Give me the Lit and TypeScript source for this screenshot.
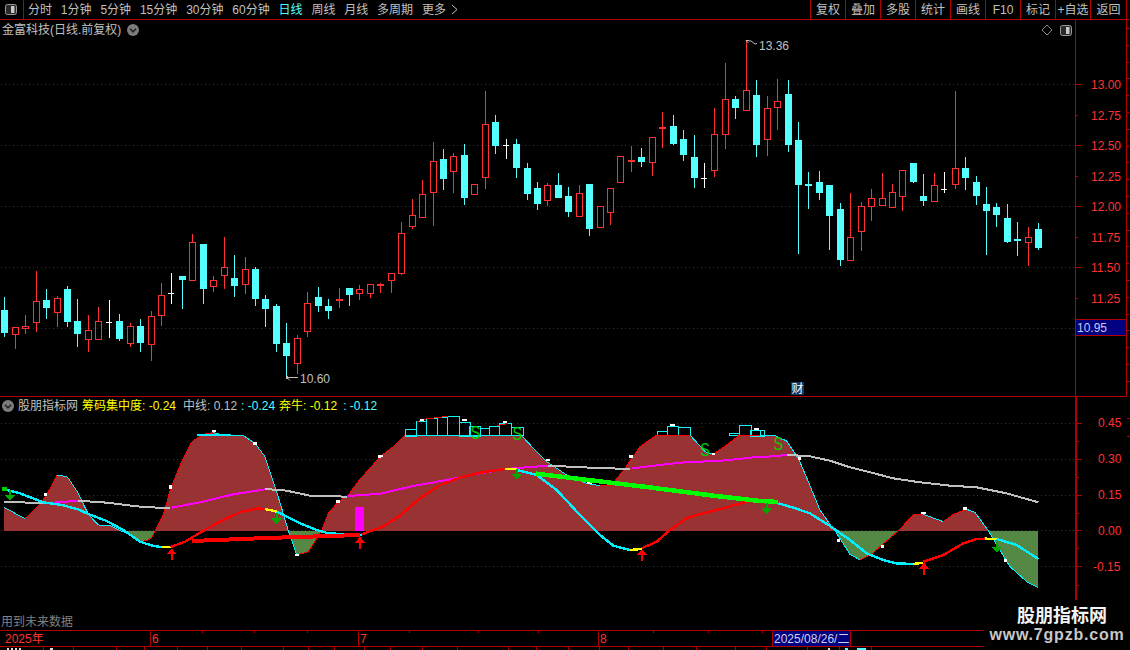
import { LitElement, html, svg, css, unsafeCSS } from "lit";
import { customElement } from "lit/decorators.js";

type P = [number, number];
const RED = "#ff3232", CYAN = "#54ffff", GRID = "#a00000", AXIS = "#b00000";
const LRED = "#ff0000", LCYAN = "#00f0ff";

// candles: [high, bodyTop, bodyBottom, low, kind] read in crop units
const A = [[621,660,729,740,"c"],[712,712,734,776,"r"],[676,709,716,731,"r"],[544,634,700,725,"r"],[598,630,654,686,"c"],[618,625,668,710,"r"],[589,597,696,710,"c"],[628,693,732,770,"c"],[676,721,749,785,"r"],[652,694,749,749,"r"],[631,697,697,743,"w"],[673,693,747,752,"c"],[700,709,761,770,"r"],[688,708,759,785,"c"],[664,679,764,812,"r"],[580,616,677,707,"r"],[550,610,610,641,"w"],[558,558,570,656,"c"],[433,457,572,572,"r"],[462,462,597,641,"c"],[559,571,590,605,"r"],[442,532,557,596,"r"],[496,565,588,620,"c"],[502,538,584,611,"r"],[532,538,627,647,"c"],[616,628,657,710,"c"],[643,649,762,785,"c"],[700,759,798,860,"c"],[736,745,821,851,"r"],[607,640,725,740,"r"],[592,622,648,665,"c"],[628,649,663,686,"c"],[595,626,626,653,"R"],[595,595,615,647,"c"],[586,598,611,629,"r"],[583,583,611,623,"r"],[578,581,581,609,"R"]];
const B = [[580,580,603,639,"r"],[427,460,581,585,"r"],[358,406,440,446,"r"],[300,343,413,413,"r"],[186,244,338,437,"r"],[208,237,297,330,"c"],[220,229,275,338,"r"],[193,225,354,374,"c"],[313,313,344,344,"r"],[34,133,293,326,"r"],[106,126,197,221,"c"],[178,196,196,236,"w"],[178,192,264,293,"c"],[250,264,342,360,"c"],[307,324,372,390,"c"],[310,316,362,377,"r"],[280,315,354,354,"c"],[322,348,396,411,"c"],[316,340,410,410,"r"],[312,312,447,468,"c"],[379,379,443,443,"r"],[325,325,398,435,"r"],[229,229,308,308,"r"],[199,240,240,276,"R"],[205,232,246,261,"c"],[172,172,248,288,"r"],[97,142,148,204,"r"],[106,138,192,195,"c"],[151,177,225,243,"c"],[166,231,294,324,"c"],[250,295,295,324,"w"],[85,163,272,291,"r"],[-51,58,164,207,"r"],[48,57,84,117,"c"],[-120,31,92,92,"r"],[0,45,195,231,"c"]];
const C = [[108,145,239,288,"r"],[57,124,143,210,"r"],[60,102,255,276,"c"],[186,240,375,582,"c"],[336,371,371,447,"C"],[333,366,399,420,"c"],[375,375,468,570,"c"],[429,447,600,618,"c"],[400,532,602,602,"r"],[427,439,515,573,"r"],[387,415,440,483,"r"],[340,415,437,437,"r"],[372,397,443,443,"r"],[331,331,410,453,"r"],[309,309,366,370,"c"],[342,408,423,438,"c"],[340,376,425,425,"r"],[336,388,388,398,"w"],[93,325,374,387,"r"],[291,324,354,390,"c"],[348,366,408,435,"c"],[381,432,453,585,"c"],[429,441,465,501,"c"],[432,474,546,549,"c"],[486,537,537,588,"C"],[501,532,548,618,"r"],[489,507,565,570,"c"]];
const cv = (rows: any[], off: number) => rows.map((r) => [off + r[0] / 3, off + r[1] / 3, off + r[2] / 3, off + r[3] / 3, r[4]]);
const CANDLES: any[] = [...cv(A, 90), ...cv(B, 80), ...cv(C, 60)];

const s6 = (a: number[]): P[] => pairs(a, 0);
const s7 = (a: number[]): P[] => pairs(a, 380);
const s8 = (a: number[]): P[] => pairs(a, 750);
function pairs(a: number[], ox: number): P[] {
  const out: P[] = [];
  for (let i = 0; i < a.length; i += 2) out.push([ox + a[i] / 3, 395 + a[i + 1] / 3]);
  return out;
}
const ps = (p: P[]) => p.map((q) => q.join(",")).join(" ");

const AREA: P[] = [
  ...s6([12,337,75,371,113,335,140,300,172,240,202,245,232,290,265,358,295,390,330,392,360,407,385,415,420,440,440,437,455,428,465,407,490,360,512,280,545,200,575,140,610,118,640,113,670,120,730,122,765,145,795,185,830,290,865,407,890,480,925,470,965,407,985,355,1015,320,1045,300,1078,255,1110,220]),
  ...s7([0,185,40,155,75,120,425,122,465,165,500,200,560,240,620,265,660,272,695,270,735,220,780,155,830,120,930,120,975,170,1000,178,1040,150,1080,120]),
  ...s8([30,120,75,122,110,138,145,190,175,260,210,345,245,395,255,407,300,478,330,495,365,477,430,420,445,407,490,360,520,358,580,380,610,358,650,343,675,352,715,407,780,515,830,560,865,578]),
];
const AREA_POLY: P[] = [[AREA[0][0], 531], ...AREA, [AREA[AREA.length - 1][0], 531]];

const MAIN_LINE: [string, P[]][] = [
  [LCYAN, s6([22,285,60,295,130,322,185,330,235,343,265,357,320,378,370,405,420,440,460,453,485,456])],
  ["#ffff00", s6([485,456,512,456])],
  [LRED, s6([512,456,555,440,600,413,660,380,720,352,770,340,795,342])],
  ["#ffff00", s6([795,342,830,350])],
  [LCYAN, s6([830,350,900,385,950,405,985,415,1085,420])],
  [LRED, [...s6([1085,418,1140,398]), ...s7([0,400,60,362,120,310,180,270,240,248,300,233,375,222])]],
  ["#ffff00", s7([375,222,410,222])],
  [LCYAN, s7([410,225,470,240,530,285,600,360,660,420,700,452,750,465])],
  ["#ffff00", s7([750,465,785,462])],
  [LRED, s7([785,460,830,440,870,405,920,370,950,360,1040,337,1100,320,1140,315])],
  [LCYAN, s8([85,325,130,338,180,355,240,393,300,435,350,475,400,495,440,505,490,507])],
  ["#ffff00", s8([490,507,520,503])],
  [LRED, s8([520,500,580,480,640,445,680,432,705,431])],
  ["#ffff00", s8([705,431,740,432])],
  [LCYAN, s8([740,432,800,450,865,492])],
];
const GRAY = "#c0c0c0", MAG = "#ff00ff";
const MA_LINE: [string, P[]][] = [
  [GRAY, s6([12,322,130,323])],
  [MAG, s6([135,325,235,317])],
  [GRAY, s6([235,317,320,323,420,335,510,340])],
  [MAG, s6([515,338,600,322,700,298,795,283])],
  [GRAY, s6([795,282,860,287,930,302,1040,305])],
  [MAG, [...s6([1045,303,1140,296]), ...s7([0,296,100,273,200,255,300,235,375,222,505,212])]],
  [GRAY, s7([505,212,630,218,750,222])],
  [MAG, [...s7([755,220,900,203,1040,196,1140,185]), ...s8([30,187,110,180])]],
  [GRAY, s8([110,180,175,183,240,197,300,217,380,237,430,250,510,262,600,272,680,277,770,295,865,322])],
];
const THICK: [string, number, P[]][] = [
  [LRED, 4, s6([575,438,800,429,1080,420])],
  ["#00ff00", 4.5, [...s7([468,236,600,252,800,276,1000,302,1140,318]), ...s8([30,318,85,321])]],
];
const WHITE: number[][] = [
  ...[[133,142,295,305],[507,516,270,282],[635,648,105,112],[760,772,140,150],[885,898,478,485],[1008,1020,315,325],[1135,1140,180,190]].map((r) => [r[0] / 3, r[1] / 3, r[2], r[3]]),
  ...[[0,5,180,186],[120,133,72,78],[245,260,72,78],[370,383,79,85],[497,510,193,200],[620,635,262,267],[747,758,181,191],[870,885,88,93],[995,1005,175,180],[1122,1137,100,105]].map((r) => [380 + r[0] / 3, 380 + r[1] / 3, r[2], r[3]]),
  ...[[143,152,185,195],[262,270,432,442],[393,402,450,458],[513,527,352,358],[640,653,337,345],[763,772,492,502]].map((r) => [750 + r[0] / 3, 750 + r[1] / 3, r[2], r[3]]),
];
const STICKS: number[][] = [
  [75,109,102],[109,139,79],[139,172,70],[172,202,67],[202,238,64],[238,270,80],[268,300,92],[300,328,100],[328,358,94],[358,393,85],[393,428,97],
  [830,860,109],[860,893,94],[893,928,97],[1048,1078,115],[1078,1115,91],[1112,1150,105],
];
const UP: P[] = [[515/3,395+460/3],[1080/3,395+425/3],[380+786/3,395+462/3],[750+522/3,395+503/3]];
const DOWN: P[] = [[30/3,395+318/3],[830/3,395+388/3],[380+411/3,395+255/3],[750+50/3,395+357/3],[750+740/3,395+473/3]];
const ESS: P[] = [[380+287/3,395+132/3],[380+412/3,395+135/3],[380+975/3,395+182/3],[750+85/3,395+165/3]];

const LEFT_TABS = ["分时","1分钟","5分钟","15分钟","30分钟","60分钟","日线","周线","月线","多周期","更多"];
const RIGHT_TABS = ["复权","叠加","多股","统计","画线","F10","标记","+自选","返回"];
const PRICE = [["13.00",85],["12.75",116],["12.50",146],["12.25",177],["12.00",207],["11.75",238],["11.50",268],["11.25",299]] as [string, number][];
const SUB = [["0.45",423,1098],["0.30",459,1098],["0.15",495,1098],["0.00",531,1098],["-0.15",567,1093]] as [string, number, number][];
const T1 = [607,763,920,1228,1435].map((z) => z / 3);
const T2 = [115,460,625,787].map((z) => 500 + z / 3);
const B1 = [128,220,347,433,532,622,724,848,925,1002,1093,1171,1267,1372].map((z) => z / 3);
const B2 = [25,109,205,297,385,490,589,706,799,922,1018,1114].map((z) => 500 + z / 3);

const chevron = svg`<circle cx="6" cy="6" r="6" fill="#7c7c7c"></circle><path d="M3 4.8 L6 7.8 L9 4.8" fill="none" stroke="#222" stroke-width="1.6"></path>`;
const panelIcon = svg`<rect x="0.5" y="0.5" width="11" height="10" rx="2" fill="#2a2a2a" stroke="#9a9a9a"></rect><rect x="6" y="2" width="3.5" height="7" fill="#c8c8c8"></rect>`;

@customElement("app-root")
export class AppRoot extends LitElement {
  static styles = css`
    :host { display: block; position: relative; width: 1130px; height: 650px; overflow: hidden; background: #000; color: #c0c0c0;
      font: 12px/1 "Liberation Sans", "Noto Sans CJK SC", sans-serif; }
    svg { display: block; }
    .toolbar { display: flex; align-items: stretch; height: 19px; border-bottom: 1px solid ${unsafeCSS(AXIS)}; padding-right: 3px; }
    .menu-btn { border-right: 1px solid ${unsafeCSS(AXIS)}; display: flex; align-items: center; justify-content: center; padding-right: 1px; box-sizing: border-box; width: 24px; }
    .tabs { display: flex; align-items: center; gap: 8.85px; padding-left: 4px; }
    .tab.on { color: ${unsafeCSS(CYAN)}; }
    .more { display: flex; align-items: center; gap: 5px; }
    .tools { display: flex; margin-left: auto; border-right: 1px solid ${unsafeCSS(AXIS)}; }
    .tool { width: 35px; box-sizing: border-box; border-left: 1px solid ${unsafeCSS(AXIS)}; display: flex; align-items: center; justify-content: center; }
    .tool:last-child { width: 36px; }
    .pane { position: relative; }
    .main { height: 376px; }
    .sub { height: 234px; }
    .title { position: absolute; left: 2px; top: 0; height: 19px; display: flex; align-items: center; gap: 6px; }
    .corner { position: absolute; left: 1041px; top: 4px; display: flex; align-items: center; gap: 7px; }
    .legend { position: absolute; left: 2px; top: 1px; height: 17px; display: flex; align-items: center; gap: 4px; white-space: pre; }
    .y { color: #ffff00; }
    .c { color: ${unsafeCSS(CYAN)}; }
    .mid { margin-left: 3px; }
    .last { margin-left: 2px; }
    .note { position: absolute; left: 1px; top: 220px; color: #808080; }
    .axis-label { font: 12px "Liberation Sans", "Noto Sans CJK SC", sans-serif; fill: ${unsafeCSS(RED)}; }
    .callout { font: 12px "Liberation Sans", sans-serif; fill: #c0c0c0; }
    .quote { fill: #c8c8f0; }
    .ess { font: 18px "Liberation Sans", sans-serif; fill: #00d000; }
    .chip { font: 12px "Noto Sans CJK SC", sans-serif; fill: #fff; }
    .date { font: 12px "Liberation Sans", "Noto Sans CJK SC", sans-serif; fill: #d0d0e8; }
    .crisp { shape-rendering: crispEdges; }
    .watermark { position: absolute; right: 0; bottom: 0; width: 146px; height: 50px; background: #000; display: flex; flex-direction: column; align-items: center; gap: 2px; padding-top: 4px; box-sizing: border-box; }
    .wm-a { font: bold 18px/20px "Noto Sans CJK SC", sans-serif; color: #f4f4f4; margin-left: 10px; }
    .wm-b { font: bold 16px/18px "Liberation Sans", sans-serif; letter-spacing: 0.8px; color: #c8c8c8; }
  `;

  private dots(y: number) {
    return svg`<line x1="1" x2="1075" y1=${y + 0.5} y2=${y + 0.5} stroke=${GRID} stroke-dasharray="1 3" class="crisp"></line>`;
  }

  private candle(c: any, i: number) {
    const x = Math.round(4.3 + 10.444 * i);
    const [hi, top, bot, lo] = [c[0], c[1], c[2], c[3]].map((v: number) => Math.round(v));
    const k = c[4];
    const col = k === "w" ? "#fff" : k === "c" || k === "C" ? CYAN : RED;
    if (k === "w" || k === "R" || k === "C") {
      const h = k === "w" ? 1 : 2;
      return svg`<rect x=${x} y=${hi} width="1" height=${lo - hi} fill=${col}></rect><rect x=${x - 3} y=${top} width=${k === "w" ? 6 : 7} height=${h} fill=${col}></rect>`;
    }
    if (k === "c") {
      return svg`<rect x=${x} y=${hi} width="1" height=${lo - hi} fill=${col}></rect><rect x=${x - 3} y=${top} width="7" height=${bot - top} fill=${col}></rect>`;
    }
    return svg`<rect x=${x} y=${hi} width="1" height=${top - hi} fill=${col}></rect><rect x=${x} y=${bot} width="1" height=${lo - bot} fill=${col}></rect><rect x=${x - 2.5} y=${top + 0.5} width="6" height=${bot - top - 1} fill="none" stroke=${col}></rect>`;
  }

  private mainChart() {
    const grid = [84, 145, 206, 267, 328];
    const minors = [115, 176, 237, 298];
    const rt: number[] = [];
    for (let y = 28; y < 396; y += 16.8) rt.push(Math.round(y));
    return html`<svg width="1130" height="376" viewBox="0 20 1130 376">
      ${grid.map((y) => this.dots(y))}
      <g class="crisp">
        <rect x="1075" y="20" width="1" height="376" fill=${AXIS}></rect>
        <rect x="1126" y="20" width="1" height="376" fill=${AXIS}></rect>
        ${grid.map((y) => svg`<rect x="1076" y=${y} width="5" height="1" fill=${AXIS}></rect>`)}
        ${minors.map((y) => svg`<rect x="1076" y=${y} width="2" height="1" fill=${AXIS}></rect>`)}
        ${rt.map((y, i) => svg`<rect x="1127" y=${y} width=${i % 3 === 0 ? 3 : 2} height="1" fill=${AXIS}></rect>`)}
        ${CANDLES.map((c, i) => this.candle(c, i))}
        <rect x="1075.5" y="319.5" width="51" height="16" fill="#000080" stroke=${AXIS}></rect>
      </g>
      ${PRICE.map(([t, y]) => svg`<text class="axis-label" x="1091" y=${y + 4}>${t}</text>`)}
      <text class="callout quote" x="1077" y="332">10.95</text>
      <path d="M746 40.5 H749 M746 40.5 L748.5 43 M749 41 Q751 40 753 42.5 T757 43.5" fill="none" stroke="#c0c0c0"></path>
      <text class="callout" x="759" y="50">13.36</text>
      <path d="M287 377.5 H298 M287 377.5 L290 380.5" fill="none" stroke="#c0c0c0"></path>
      <rect x="286" y="376" width="2" height="3" fill="#c0c0c0"></rect>
      <text class="callout" x="300" y="383">10.60</text>
      <rect x="791" y="382" width="13" height="13" fill="#0f3a66"></rect>
      <text class="chip" x="791.5" y="393">财</text>
    </svg>`;
  }

  private subChart() {
    const grid = [423, 459, 495, 530, 566];
    const minors = [441, 477, 513, 548, 585];
    const segs: any[] = [];
    let col = LCYAN;
    for (let i = 0; i < AREA.length - 1; i++) {
      const a = AREA[i], b = AREA[i + 1];
      if (b[1] - a[1] > 0.6) col = LCYAN;
      else if (a[1] - b[1] > 0.6) col = LRED;
      segs.push(svg`<line x1=${a[0]} y1=${a[1]} x2=${b[0]} y2=${b[1]} stroke=${col}></line>`);
    }
    const base = 395 + 122 / 3;
    const stick = (x1: number, x2: number, top: number, ox: number) =>
      svg`<rect x=${Math.round(ox + x1 / 3) + 0.5} y=${Math.round(395 + top / 3) + 0.5} width=${Math.round((x2 - x1) / 3)} height=${Math.round(base - (395 + top / 3))} fill="none" stroke="#19f0f5"></rect>`;
    return html`<svg width="1130" height="234" viewBox="0 396 1130 234">
      <defs>
        <clipPath id="above"><rect x="0" y="396" width="1075" height="135"></rect></clipPath>
        <clipPath id="below"><rect x="0" y="531" width="1075" height="99"></rect></clipPath>
      </defs>
      ${grid.map((y) => this.dots(y))}
      <g class="crisp">
        <rect x="0" y="396" width="1127" height="1" fill=${AXIS}></rect>
        <rect x="1075" y="396" width="2" height="234" fill=${AXIS}></rect>
        ${grid.map((y) => svg`<rect x="1077" y=${y} width="5" height="1" fill=${AXIS}></rect>`)}
        ${minors.map((y) => svg`<rect x="1077" y=${y} width="2" height="1" fill=${AXIS}></rect>`)}
        ${[418, 436].map((y) => svg`<rect x="1127" y=${y} width="3" height="1" fill=${AXIS}></rect>`)}
        <polygon points=${ps(AREA_POLY)} fill="#993333" clip-path="url(#above)"></polygon>
        <polygon points=${ps(AREA_POLY)} fill="#558844" clip-path="url(#below)"></polygon>
        ${STICKS.map((s) => stick(s[0], s[1], s[2], 380))}
        ${stick(0, 30, 105, 750)}
        ${segs}
        <polyline points=${ps(s7([110,80,138,72,170,68,205,64]))} fill="none" stroke=${LRED}></polyline>
        <polyline points=${ps(s7([350,92,385,85]))} fill="none" stroke=${LRED}></polyline>
        <polyline points=${ps(s6([590,120,725,121]))} fill="none" stroke=${LCYAN} stroke-width="1.5"></polyline>
        ${WHITE.map((w) => svg`<rect x=${Math.round(w[0])} y=${Math.round(395 + w[2] / 3)} width=${Math.max(3, Math.round(w[1] - w[0]))} height=${Math.max(2, Math.round((w[3] - w[2]) / 3))} fill="#fff"></rect>`)}
        ${MA_LINE.map(([c, p]) => svg`<polyline points=${ps(p)} fill="none" stroke=${c} stroke-width="2"></polyline>`)}
        ${MAIN_LINE.map(([c, p]) => svg`<polyline points=${ps(p)} fill="none" stroke=${c} stroke-width="2.4"></polyline>`)}
        ${THICK.map(([c, w, p]) => svg`<polyline points=${ps(p)} fill="none" stroke=${c} stroke-width=${w}></polyline>`)}
        <rect x="355" y="507" width="9" height="24" fill="#ff00ff"></rect>
        <rect x="2" y="487" width="5" height="4" fill="#00d000"></rect>
        ${UP.map(([x, y]) => svg`<polygon points="${x},${y} ${x - 5},${y + 6} ${x + 5},${y + 6}" fill="#ff0000"></polygon><rect x=${Math.round(x) - 1} y=${y + 5} width="2" height="7" fill="#ff0000"></rect>`)}
        ${DOWN.map(([x, y]) => svg`<polygon points="${x},${y} ${x - 5.5},${y - 6} ${x + 5.5},${y - 6}" fill="#00a800"></polygon><rect x=${Math.round(x) - 1} y=${y - 11} width="2" height="6" fill="#00a800"></rect>`)}
      </g>
      ${ESS.map(([x, y]) => svg`<text class="ess" transform="translate(${x - 4.8} ${y}) scale(0.8 1)">S</text>`)}
      ${SUB.map(([t, y, x]) => svg`<text class="axis-label" x=${x} y=${y + 4}>${t}</text>`)}
    </svg>`;
  }

  private timeAxis() {
    return html`<svg width="1130" height="20" viewBox="0 630 1130 20">
      <g class="crisp">
        <rect x="0" y="630" width="984" height="1" fill=${AXIS}></rect>
        <rect x="0" y="646" width="984" height="1" fill=${AXIS}></rect>
        ${[150, 358, 598].map((x) => svg`<rect x=${x} y="630" width="1" height="16" fill=${AXIS}></rect>`)}
        ${[...T1, ...T2].map((x) => svg`<rect x=${Math.round(x)} y="631" width="1" height="2" fill=${AXIS}></rect>`)}
        ${[...B1, ...B2].map((x) => svg`<rect x=${Math.round(x)} y="647" width="1" height="3" fill=${AXIS}></rect>`)}
        <rect x="772.5" y="630.5" width="78" height="16" fill="#000080" stroke=${AXIS}></rect>
        ${[7, 11, 15, 19].map((x) => svg`<rect x=${x} y="648" width="2" height="2" fill="#ddd"></rect>`)}
        <rect x="50" y="648" width="3" height="2" fill="#ddd"></rect>
        <rect x="828" y="648" width="2" height="2" fill="#ddd"></rect>
        <rect x="845" y="648" width="3" height="2" fill=${CYAN}></rect>
        <rect x="857" y="648" width="9" height="2" fill=${CYAN}></rect>
      </g>
      <text class="axis-label" x="5" y="643">2025年</text>
      <text class="axis-label" x="152" y="643">6</text>
      <text class="axis-label" x="360" y="643">7</text>
      <text class="axis-label" x="600" y="643">8</text>
      <text class="date" x="774" y="643">2025/08/26/二</text>
    </svg>`;
  }

  render() {
    return html`
      <div class="toolbar">
        <div class="menu-btn"><svg width="12" height="11">${panelIcon}</svg></div>
        <div class="tabs">
          ${LEFT_TABS.slice(0, 10).map((t) => html`<span class="tab ${t === "日线" ? "on" : ""}">${t}</span>`)}
          <span class="more"><span>${LEFT_TABS[10]}</span><svg width="7" height="11"><path d="M1 1 L6 5.5 L1 10" fill="none" stroke="#c0c0c0"></path></svg></span>
        </div>
        <div class="tools">${RIGHT_TABS.map((t) => html`<div class="tool">${t}</div>`)}</div>
      </div>
      <section class="pane main">
        ${this.mainChart()}
        <div class="title"><span>金富科技(日线.前复权)</span><svg width="12" height="12">${chevron}</svg></div>
        <div class="corner">
          <svg width="12" height="12"><path d="M6 1 L11 6 L6 11 L1 6 Z" fill="none" stroke="#888"></path></svg>
          <svg width="12" height="11">${panelIcon}</svg>
        </div>
      </section>
      <section class="pane sub">
        ${this.subChart()}
        <div class="legend">
          <svg width="12" height="12">${chevron}</svg>
          <span>股朋指标网</span>
          <span class="y">筹码集中度: -0.24</span>
          <span class="mid">中线: 0.12</span>
          <span class="c">: -0.24</span>
          <span class="y">奔牛: -0.12</span>
          <span class="c last">: -0.12</span>
        </div>
        <div class="note">用到未来数据</div>
      </section>
      ${this.timeAxis()}
      <div class="watermark"><div class="wm-a">股朋指标网</div><div class="wm-b">www.7gpzb.com</div></div>
    `;
  }
}
